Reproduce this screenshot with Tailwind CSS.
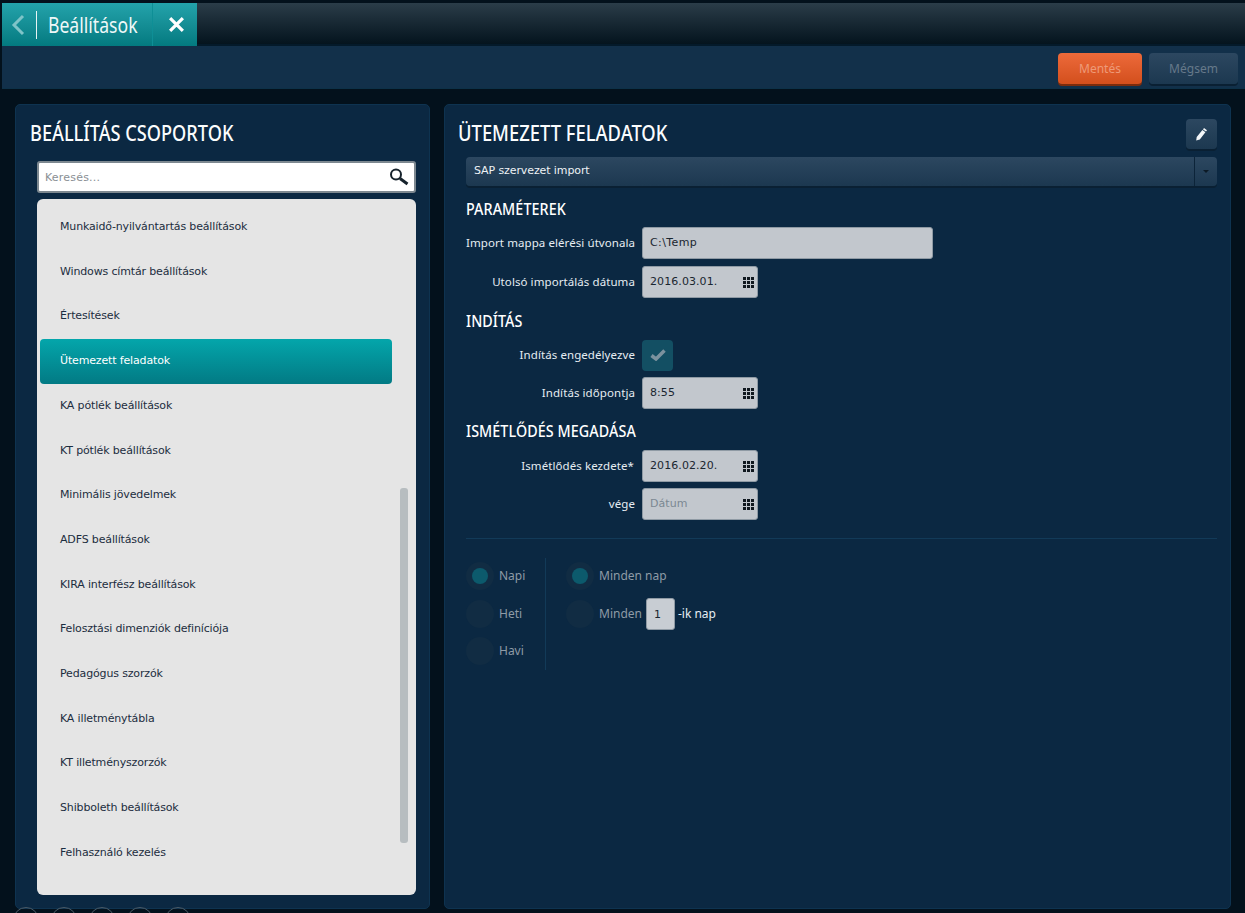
<!DOCTYPE html>
<html lang="hu">
  <head>
    <meta charset="UTF-8" />
    <meta name="viewport" content="width=device-width, initial-scale=1.0" />
    <title>Beállítások</title>
    <script src="https://cdn.jsdelivr.net/npm/@tailwindcss/browser@4"></script>
  </head>
  <body class="bg-[#03111c] font-['Noto_Sans',sans-serif] text-white">
    <div class="relative w-[1245px] h-[913px] overflow-hidden pt-[3px] pl-[2px]">
      <!-- Title bar -->
      <div class="flex h-[43px] bg-gradient-to-b from-[#2b3d49] to-[#05141e] border-b-2 border-[#041a2a]">
        <div class="flex items-center w-[151px] h-[43px] bg-gradient-to-b from-[#23a3ab] to-[#037a80] border-r border-[#0e8f96]">
          <svg class="ml-[9px] shrink-0 w-[14px] h-[22px]" viewBox="0 0 14 22" fill="none" stroke="#7fc4c8" stroke-width="3"><path d="M12 2 3 11l9 9" /></svg>
          <div class="ml-[11px] shrink-0 w-px h-[28px] bg-white/90"></div>
          <span class="ml-[11px] shrink-0 inline-block origin-left scale-x-[0.8] text-[22px] text-[#eef8f8]">Beállítások</span>
        </div>
        <div class="flex items-center justify-center w-[44px] h-[43px] pl-[2px] bg-gradient-to-b from-[#23a3ab] to-[#037a80]">
          <svg class="w-[17px] h-[17px]" viewBox="0 0 16 16" fill="none" stroke="#fff" stroke-width="3"><path d="M2 2l12 12M14 2 2 14" /></svg>
        </div>
      </div>

      <!-- Toolbar -->
      <div class="flex justify-end items-start gap-[7px] h-[43px] pt-[7px] pr-[7px] bg-[#12304a] border-b border-[#0d3148]">
        <button class="w-[84px] h-[31px] rounded-[4px] bg-gradient-to-b from-[#ed6a3a] to-[#d34f1c] shadow-[0_2px_0_#7c2c0c] text-[12px] text-[#ee9a78]">Mentés</button>
        <button class="w-[89px] h-[31px] rounded-[4px] bg-gradient-to-b from-[#2c4760] to-[#1c3850] shadow-[0_2px_0_#0a2033] text-[12px] text-[#66798a]">Mégsem</button>
      </div>

      <div class="flex gap-[14px] pl-[13px] pt-[15px]">
        <!-- Left panel -->
        <section class="relative w-[415px] h-[805px] rounded-[5px] bg-[#0b2842] border border-[#0e3350]">
          <h2 class="pl-[14px] pt-[12px] h-[56px] leading-[32px]"><span class="inline-block origin-left scale-x-[0.865] whitespace-nowrap text-[21px] font-medium text-[#fbfdfe]">BEÁLLÍTÁS CSOPORTOK</span></h2>
          <div class="flex items-center justify-between ml-[21px] w-[379px] h-[32px] rounded-[3px] bg-white border-2 border-[#7d8890] pl-[6px] pr-[4px]">
            <span class="font-['DejaVu_Sans'] text-[11px] leading-[30px] translate-y-[1px] tracking-[0.2px] text-[#8a8f94]">Keresés...</span>
            <svg class="w-[22px] h-[20px]" viewBox="0 0 22 20" fill="none" stroke="#16222c"><circle cx="8" cy="7.5" r="5" stroke-width="2" /><path d="M12 11.5l7.5 5.5" stroke-width="3" /></svg>
          </div>
          <div class="relative ml-[21px] mt-[6px] w-[379px] h-[696px] rounded-[6px] bg-[#e5e5e5] pt-[6px] pl-[3px] font-['DejaVu_Sans'] text-[11px] tracking-[-0.15px] text-[#1c2d40]">
            <div class="flex items-center h-[44.7px] pl-[20px]">Munkaidő-nyilvántartás beállítások</div>
            <div class="flex items-center h-[44.7px] pl-[20px]">Windows címtár beállítások</div>
            <div class="flex items-center h-[44.7px] pl-[20px]">Értesítések</div>
            <div class="flex items-center w-[352px] h-[44.7px] pl-[20px] rounded-[4px] bg-gradient-to-b from-[#04a6ab] to-[#027a84] text-white">Ütemezett feladatok</div>
            <div class="flex items-center h-[44.7px] pl-[20px]">KA pótlék beállítások</div>
            <div class="flex items-center h-[44.7px] pl-[20px]">KT pótlék beállítások</div>
            <div class="flex items-center h-[44.7px] pl-[20px]">Minimális jövedelmek</div>
            <div class="flex items-center h-[44.7px] pl-[20px]">ADFS beállítások</div>
            <div class="flex items-center h-[44.7px] pl-[20px]">KIRA interfész beállítások</div>
            <div class="flex items-center h-[44.7px] pl-[20px]">Felosztási dimenziók definíciója</div>
            <div class="flex items-center h-[44.7px] pl-[20px]">Pedagógus szorzók</div>
            <div class="flex items-center h-[44.7px] pl-[20px]">KA illetménytábla</div>
            <div class="flex items-center h-[44.7px] pl-[20px]">KT illetményszorzók</div>
            <div class="flex items-center h-[44.7px] pl-[20px]">Shibboleth beállítások</div>
            <div class="flex items-center h-[44.7px] pl-[20px]">Felhasználó kezelés</div>
            <!-- Scrollbar -->
            <div class="absolute left-[363px] top-[289px] w-[8px] h-[355px] rounded-[3px] bg-[#b7bdc0]"></div>
          </div>
        </section>

        <!-- Right panel -->
        <section class="relative w-[787px] h-[805px] rounded-[5px] bg-[#0b2842] border border-[#0e3350]">
          <h2 class="pl-[13px] pt-[12px] h-[52px] leading-[32px]"><span class="inline-block origin-left scale-x-[0.875] whitespace-nowrap text-[21px] font-medium text-[#fbfdfe]">ÜTEMEZETT FELADATOK</span></h2>
          <button class="absolute left-[741px] top-[14px] flex items-center justify-center w-[31px] h-[30px] rounded-[4px] bg-gradient-to-b from-[#2c4760] to-[#1c3850] shadow-[0_2px_0_#0a2033]">
            <svg class="w-[13px] h-[14px]" viewBox="0 0 13 14" fill="#f4f7f9"><path d="M9 1l3 2.2-1 1.4-3-2.2zM7.4 3.1l3 2.2-5.6 7.2-3.6 1 .5-3.6z" /></svg>
          </button>
          <div class="flex ml-[21px] w-[751px] h-[29px] rounded-[4px] bg-gradient-to-b from-[#2c4760] to-[#1c3850] shadow-[0_2px_0_#0a2033] font-['DejaVu_Sans'] text-[11px] tracking-[-0.1px] text-[#eef2f5]">
            <div class="flex-1 pl-[8px] leading-[27px] border-r border-[#0c2439]">SAP szervezet import</div>
            <div class="flex items-center justify-center w-[22px]"><div class="border-x-[3px] border-t-[3px] border-x-transparent border-t-[#0c1a26]"></div></div>
          </div>

          <div class="ml-[21px] font-['Noto_Sans'] text-[11.5px] tracking-[0.08px] text-[#e6edf2]">
            <h3 class="mt-[12px] h-[22px] leading-[22px]"><span class="inline-block origin-left scale-x-[0.895] text-[16px] font-medium text-white">PARAMÉTEREK</span></h3>
            <div class="flex items-center h-[32px] mt-[7px]">
              <label class="w-[169px] text-right whitespace-nowrap">Import mappa elérési útvonala</label>
              <div class="ml-[7px] w-[291px] h-[32px] rounded-[3px] bg-[#c2c7cd] border border-[#8f9aa4] pl-[7px] leading-[30px] font-['DejaVu_Sans'] text-[11px] tracking-[0.4px] text-[#1a2630]">C:\Temp</div>
            </div>
            <div class="flex items-center h-[32px] mt-[7px]">
              <label class="w-[169px] text-right whitespace-nowrap">Utolsó importálás dátuma</label>
              <div class="flex items-center justify-between ml-[7px] w-[116px] h-[32px] rounded-[3px] bg-[#c2c7cd] border border-[#8f9aa4] pl-[7px] pr-[3px] font-['DejaVu_Sans'] text-[11px] text-[#1a2630]">
                <span>2016.03.01.</span>
                <svg class="w-[11px] h-[11px]" viewBox="0 0 11 11" fill="#10181f"><path d="M0 0h3v3H0zM4 0h3v3H4zM8 0h3v3H8zM0 4h3v3H0zM4 4h3v3H4zM8 4h3v3H8zM0 8h3v3H0zM4 8h3v3H4zM8 8h3v3H8z" /></svg>
              </div>
            </div>

            <h3 class="mt-[12px] h-[22px] leading-[22px]"><span class="inline-block origin-left scale-x-[0.895] text-[16px] font-medium text-white">INDÍTÁS</span></h3>
            <div class="flex items-center h-[32px] mt-[7px]">
              <label class="w-[169px] text-right">Indítás engedélyezve</label>
              <div class="flex items-center justify-center ml-[7px] w-[31px] h-[31px] rounded-[4px] bg-[#134f63]">
                <svg class="w-[16px] h-[12px]" viewBox="0 0 16 12" fill="none" stroke="#7b929e" stroke-width="3.5"><path d="M1.5 6.5 6 10l8.5-8.5" /></svg>
              </div>
            </div>
            <div class="flex items-center h-[32px] mt-[6px]">
              <label class="w-[169px] text-right">Indítás időpontja</label>
              <div class="flex items-center justify-between ml-[7px] w-[116px] h-[32px] rounded-[3px] bg-[#c2c7cd] border border-[#8f9aa4] pl-[7px] pr-[3px] font-['DejaVu_Sans'] text-[11px] text-[#1a2630]">
                <span>8:55</span>
                <svg class="w-[11px] h-[11px]" viewBox="0 0 11 11" fill="#10181f"><path d="M0 0h3v3H0zM4 0h3v3H4zM8 0h3v3H8zM0 4h3v3H0zM4 4h3v3H4zM8 4h3v3H8zM0 8h3v3H0zM4 8h3v3H4zM8 8h3v3H8z" /></svg>
              </div>
            </div>

            <h3 class="mt-[11px] h-[22px] leading-[22px]"><span class="inline-block origin-left scale-x-[0.895] whitespace-nowrap text-[16px] font-medium text-white">ISMÉTLŐDÉS MEGADÁSA</span></h3>
            <div class="flex items-center h-[32px] mt-[8px]">
              <label class="w-[168px] text-right">Ismétlődés kezdete*</label>
              <div class="flex items-center justify-between ml-[8px] w-[116px] h-[32px] rounded-[3px] bg-[#c2c7cd] border border-[#8f9aa4] pl-[7px] pr-[3px] font-['DejaVu_Sans'] text-[11px] text-[#1a2630]">
                <span>2016.02.20.</span>
                <svg class="w-[11px] h-[11px]" viewBox="0 0 11 11" fill="#10181f"><path d="M0 0h3v3H0zM4 0h3v3H4zM8 0h3v3H8zM0 4h3v3H0zM4 4h3v3H4zM8 4h3v3H8zM0 8h3v3H0zM4 8h3v3H4zM8 8h3v3H8z" /></svg>
              </div>
            </div>
            <div class="flex items-center h-[32px] mt-[6px]">
              <label class="w-[169px] text-right">vége</label>
              <div class="flex items-center justify-between ml-[7px] w-[116px] h-[32px] rounded-[3px] bg-[#c2c7cd] border border-[#8f9aa4] pl-[7px] pr-[3px] font-['DejaVu_Sans'] text-[11px] text-[#7b8792]">
                <span>Dátum</span>
                <svg class="w-[11px] h-[11px]" viewBox="0 0 11 11" fill="#10181f"><path d="M0 0h3v3H0zM4 0h3v3H4zM8 0h3v3H8zM0 4h3v3H0zM4 4h3v3H4zM8 4h3v3H8zM0 8h3v3H0zM4 8h3v3H4zM8 8h3v3H8z" /></svg>
              </div>
            </div>

            <div class="mt-[18px] w-[751px] h-px bg-[#123a58]"></div>

            <!-- Repeat options -->
            <div class="flex mt-[19px] text-[12px] tracking-normal text-[#8e9ba6]">
              <div class="w-[80px] h-[112px] pt-[4px] border-r border-[#123a58] flex flex-col gap-[9.5px]">
                <div class="flex items-center h-[28px]">
                  <div class="flex items-center justify-center w-[28px] h-[28px] rounded-full bg-[#112c43]"><div class="w-[16px] h-[16px] rounded-full bg-[#0c5a6c]"></div></div>
                  <span class="ml-[5px]">Napi</span>
                </div>
                <div class="flex items-center h-[28px]">
                  <div class="w-[28px] h-[28px] rounded-full bg-[#112c43]"></div>
                  <span class="ml-[5px]">Heti</span>
                </div>
                <div class="flex items-center h-[28px]">
                  <div class="w-[28px] h-[28px] rounded-full bg-[#112c43]"></div>
                  <span class="ml-[5px]">Havi</span>
                </div>
              </div>
              <div class="ml-[20px] pt-[4px] flex flex-col gap-[9.5px]">
                <div class="flex items-center h-[28px]">
                  <div class="flex items-center justify-center w-[28px] h-[28px] rounded-full bg-[#112c43]"><div class="w-[16px] h-[16px] rounded-full bg-[#0c5a6c]"></div></div>
                  <span class="ml-[5px]">Minden nap</span>
                </div>
                <div class="flex items-center h-[28px]">
                  <div class="w-[28px] h-[28px] rounded-full bg-[#112c43]"></div>
                  <span class="ml-[5px]">Minden</span>
                  <div class="ml-[4px] w-[29px] h-[32px] rounded-[3px] bg-[#c8cdd3] border border-[#8f9aa4] pl-[7px] leading-[32px] font-['DejaVu_Sans'] text-[11px] text-[#1a2630]">1</div>
                  <span class="ml-[3px] text-[#e6edf2]">-ik nap</span>
                </div>
              </div>
            </div>
          </div>
        </section>
      </div>

      <!-- Bottom icons, cut off by the window -->
      <div class="absolute left-[13px] top-[907px] flex gap-[12px]">
        <div class="w-[26px] h-[26px] rounded-full border border-[#4a5a66]"></div>
        <div class="w-[26px] h-[26px] rounded-full border border-[#4a5a66]"></div>
        <div class="w-[26px] h-[26px] rounded-full border border-[#4a5a66]"></div>
        <div class="w-[26px] h-[26px] rounded-full border border-[#4a5a66]"></div>
        <div class="w-[26px] h-[26px] rounded-full border border-[#4a5a66]"></div>
      </div>
    </div>
  </body>
</html>
